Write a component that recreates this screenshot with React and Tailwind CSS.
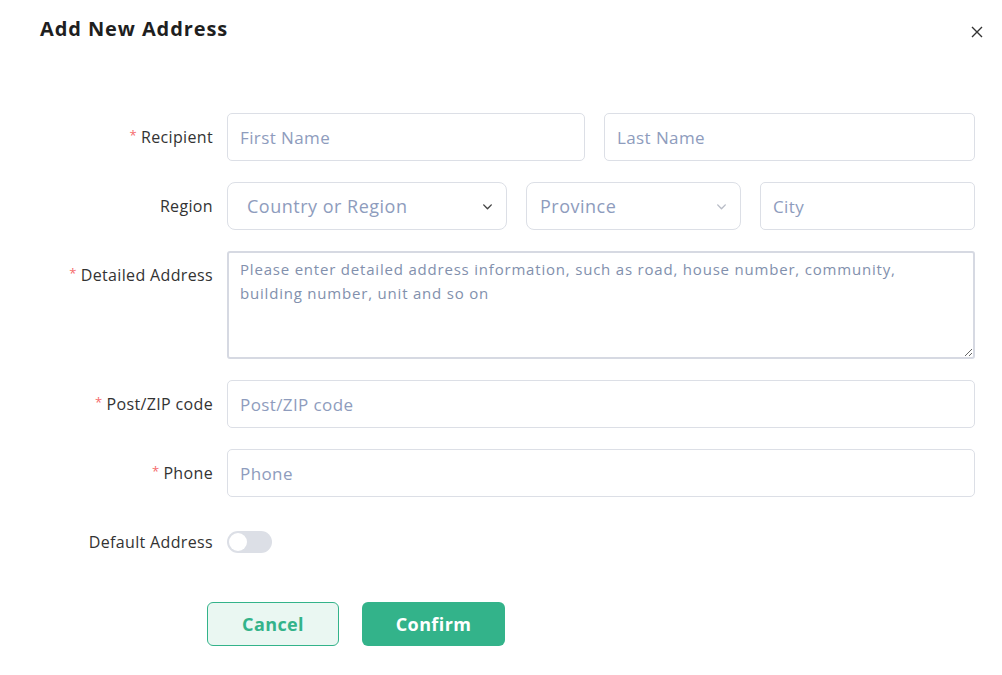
import React, { useState } from "react";

const font = { fontFamily: '"Open Sans", "DejaVu Sans", sans-serif' };

function Label({ required, children }) {
  return (
    <div className="w-[227px] h-[48px] shrink-0 pr-[14px] flex items-center justify-end text-[16px] tracking-[0.35px] text-[#333]">
      {required && <span className="text-[#f56c6c] text-[13px] leading-none mr-[4px] -mt-[3px]">*</span>}
      <span>{children}</span>
    </div>
  );
}

function Chevron({ className }) {
  return (
    <svg viewBox="0 0 12 12" className={className} fill="none" stroke="currentColor" strokeWidth="1.3">
      <path d="M2.5 4.5 L6 8 L9.5 4.5" strokeLinecap="round" strokeLinejoin="round" />
    </svg>
  );
}

const inputCls =
  "h-[48px] min-w-0 rounded-[5px] border border-[#dcdfe6] bg-white px-[12px] text-[17px] tracking-[0.4px] text-[#333] placeholder:text-[#8e9cbd] outline-none";

export default function App() {
  const [isDefault, setIsDefault] = useState(false);
  return (
    <div className="w-[1002px] h-[675px] bg-white relative" style={font}>
      <div className="flex items-start justify-between pl-[40px] pr-[18px] pt-[16px]">
        <h2 className="text-[20px] font-bold text-[#1f1f1f] leading-[26px] tracking-[0.9px]">Add New Address</h2>
        <button className="mt-[9px] text-[#333]">
          <svg viewBox="0 0 14 14" className="w-[14px] h-[14px]" fill="none" stroke="currentColor" strokeWidth="1.4">
            <path d="M2 2 L12 12 M12 2 L2 12" />
          </svg>
        </button>
      </div>

      <div className="mt-[71px] flex flex-col gap-[21px] pr-[27px]">
        <div className="flex">
          <Label required>Recipient</Label>
          <div className="flex flex-1 min-w-0 gap-[19px]">
            <input className={`${inputCls} flex-1`} placeholder="First Name" />
            <input className={`${inputCls} w-[371px]`} placeholder="Last Name" />
          </div>
        </div>

        <div className="flex">
          <Label>Region</Label>
          <div className="flex flex-1 min-w-0 gap-[19px]">
            <div className="w-[280px] h-[48px] shrink-0 rounded-[8px] border border-[#dcdfe6] flex items-center justify-between pl-[19px] pr-[12px]">
              <span className="text-[18px] tracking-[0.5px] text-[#8e9cbd]">Country or Region</span>
              <Chevron className="w-[13px] h-[13px] text-[#444]" />
            </div>
            <div className="w-[215px] h-[48px] shrink-0 rounded-[8px] border border-[#dcdfe6] flex items-center justify-between pl-[13px] pr-[12px]">
              <span className="text-[18px] tracking-[0.5px] text-[#8e9cbd]">Province</span>
              <Chevron className="w-[13px] h-[13px] text-[#b8bcc6]" />
            </div>
            <input className={`${inputCls} flex-1`} placeholder="City" />
          </div>
        </div>

        <div className="flex">
          <Label required>Detailed Address</Label>
          <textarea
            className="flex-1 min-w-0 h-[108px] rounded-[3px] border-2 border-[#d6d9e2] px-[11px] py-[4px] text-[15px] leading-[24px] tracking-[0.8px] text-[#333] placeholder:text-[#8290ad] outline-none"
            placeholder={"Please enter detailed address information, such as road, house number, community,\nbuilding number, unit and so on"}
          />
        </div>

        <div className="flex">
          <Label required>Post/ZIP code</Label>
          <input className={`${inputCls} flex-1`} placeholder="Post/ZIP code" />
        </div>

        <div className="flex">
          <Label required>Phone</Label>
          <input className={`${inputCls} flex-1`} placeholder="Phone" />
        </div>

        <div className="flex items-center">
          <Label>Default Address</Label>
          <button
            onClick={() => setIsDefault(!isDefault)}
            className="w-[45px] h-[22px] rounded-full bg-[#dcdfe6] p-[2px] flex items-center"
          >
            <span className="w-[18px] h-[18px] rounded-full bg-white block" />
          </button>
        </div>
      </div>

      <div className="mt-[36px] flex gap-[23px] pl-[207px]">
        <button className="w-[132px] h-[44px] rounded-[6px] border border-[#33b38a] bg-[#eaf7f2] text-[#33b38a] text-[18px] font-bold tracking-[0.4px]">
          Cancel
        </button>
        <button className="w-[143px] h-[44px] rounded-[6px] bg-[#33b38a] text-white text-[18px] font-bold tracking-[0.4px]">
          Confirm
        </button>
      </div>
    </div>
  );
}
